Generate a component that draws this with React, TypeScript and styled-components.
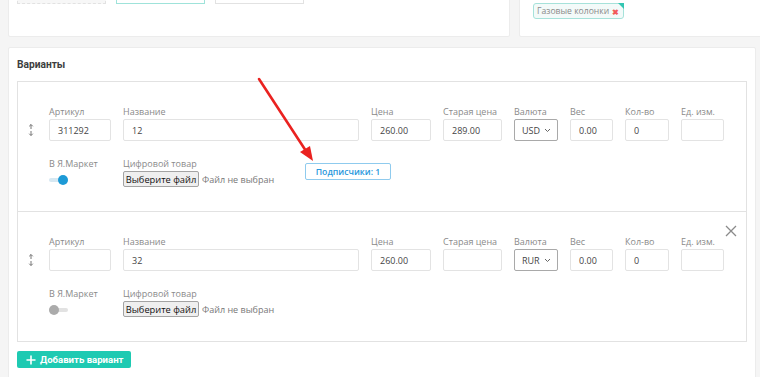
import React from "react";
import styled, { createGlobalStyle } from "styled-components";

const GlobalStyle = createGlobalStyle`
  html, body { margin: 0; padding: 0; }
  body {
    background: #f5f5f5;
    font-family: "Open Sans", "Liberation Sans", sans-serif;
    overflow: hidden;
    width: 760px;
    height: 377px;
  }
  * { box-sizing: border-box; }
`;

const Page = styled.div`
  position: relative;
  width: 760px;
  height: 377px;
  overflow: hidden;
  padding-left: 8px;
`;

const TopRow = styled.div`
  display: flex;
  gap: 9px;
  margin-top: -40px;
  height: 77px;
`;

const TopCard = styled.div<{ $w: number }>`
  flex: 0 0 ${(p) => p.$w}px;
  background: #fff;
  border: 1px solid #ececec;
  border-radius: 2px;
`;

const BoxesRow = styled.div`
  display: flex;
  gap: 10px;
  padding: 8px 0 0 8px;
`;

const ImgBox = styled.div<{ $active?: boolean; $dashed?: boolean }>`
  width: 89px;
  height: 35px;
  background: ${(p) => (p.$dashed ? "#f7f7f7" : "#fff")};
  border: 1px ${(p) => (p.$dashed ? "dashed" : "solid")}
    ${(p) => (p.$active ? "#9fe3da" : "#e2e2e2")};
`;

const TagWrap = styled.div`
  padding: 36px 0 0 13px;
`;

const Tag = styled.span`
  position: relative;
  display: inline-flex;
  align-items: center;
  gap: 3px;
  height: 16px;
  padding: 0 4px 0 3px;
  background: #f3faf9;
  border: 1px solid #a6e2da;
  border-radius: 3px;
  color: #8a8a8a;
  font-size: 8.6px;
  &::after {
    content: "";
    position: absolute;
    top: -1px;
    right: -1px;
    border-style: solid;
    border-width: 0 6px 6px 0;
    border-color: transparent #33c6b2 transparent transparent;
  }
`;

const TagX = styled.span`
  color: #f25b5b;
  font-size: 8px;
  font-weight: 700;
`;

const MainCard = styled.div`
  margin-top: 10px;
  width: 748px;
  background: #fff;
  border: 1px solid #ececec;
  border-radius: 2px;
  padding: 10px 8px 20px 8px;
`;

const Heading = styled.div`
  font-family: Roboto, "Open Sans", sans-serif;
  font-size: 10.2px;
  font-weight: 700;
  color: #3d3d3d;
  line-height: 14px;
  margin-bottom: 9px;
`;

const VariantBox = styled.div`
  position: relative;
  height: 131px;
  border: 1px solid #e2e2e2;
  padding: 23px 0 0 0;
  & + & {
    margin-top: -1px;
  }
`;

const FieldRow = styled.div`
  display: flex;
  align-items: flex-end;
`;

const Handle = styled.div`
  width: 31px;
  height: 22px;
  display: flex;
  align-items: center;
  padding-left: 10px;
`;

const Fields = styled.div`
  display: flex;
  gap: 12px;
`;

const Field = styled.div<{ $w: number }>`
  width: ${(p) => p.$w}px;
  display: flex;
  flex-direction: column;
`;

const Label = styled.div`
  font-size: 9px;
  line-height: 14px;
  color: #8a8a8a;
  white-space: nowrap;
`;

const Input = styled.div`
  height: 22px;
  border: 1px solid #e3e3e3;
  border-radius: 2px;
  font-size: 9px;
  color: #444;
  display: flex;
  align-items: center;
  padding-left: 8px;
`;

const Select = styled(Input)`
  border-color: #a9a9a9;
  padding-left: 7px;
  gap: 4px;
`;

const SecondRow = styled.div`
  display: flex;
  margin-top: 16px;
  padding-left: 31px;
`;

const ToggleCol = styled.div`
  width: 74px;
  display: flex;
  flex-direction: column;
`;

const Toggle = styled.div<{ $on?: boolean }>`
  position: relative;
  width: 20px;
  height: 16px;
  margin-top: 1px;
  &::before {
    content: "";
    position: absolute;
    left: 0;
    top: 6px;
    width: 19px;
    height: 4px;
    border-radius: 2px;
    background: ${(p) => (p.$on ? "#d6e8f2" : "#e2e2e2")};
  }
  &::after {
    content: "";
    position: absolute;
    top: 3px;
    left: ${(p) => (p.$on ? "9px" : "0")};
    width: 10px;
    height: 10px;
    border-radius: 50%;
    background: ${(p) => (p.$on ? "#1d9ad6" : "#ababab")};
  }
`;

const FileCol = styled.div`
  width: 182px;
  display: flex;
  flex-direction: column;
`;

const FileLine = styled.div`
  display: flex;
  align-items: center;
  gap: 3px;
`;

const FileButton = styled.div`
  height: 16px;
  width: 76px;
  display: flex;
  align-items: center;
  justify-content: center;
  background: #efefef;
  border: 1px solid #a3a3a3;
  border-radius: 2px;
  font-size: 9.3px;
  color: #111;
  white-space: nowrap;
`;

const FileText = styled.span`
  font-size: 9px;
  color: #777;
  white-space: nowrap;
`;

const SubsButton = styled.div`
  margin-top: 6px;
  width: 86px;
  height: 17px;
  border: 1px solid #8fcbee;
  border-radius: 2px;
  color: #2a98dc;
  font-size: 8.7px;
  font-weight: 600;
  display: flex;
  align-items: center;
  justify-content: center;
  white-space: nowrap;
`;

const CloseBtn = styled.div`
  position: absolute;
  top: 8px;
  right: 9px;
  width: 12px;
  height: 12px;
`;

const AddButton = styled.div`
  margin-top: 9px;
  width: 114px;
  height: 17px;
  background: #1ecab2;
  border-radius: 2px;
  color: #fff;
  font-family: Roboto, "Open Sans", sans-serif;
  font-size: 9.6px;
  font-weight: 700;
  display: flex;
  align-items: center;
  gap: 4px;
  padding-left: 9px;
  white-space: nowrap;
`;

const Arrow = styled.svg`
  position: absolute;
  left: 0;
  top: 0;
  pointer-events: none;
`;

const SortIcon = () => (
  <svg width="6" height="12" viewBox="0 0 6 12">
    <path d="M3 0.5 L3 5" stroke="#777" strokeWidth="1" />
    <path d="M1.2 2.3 L3 0.5 L4.8 2.3" stroke="#777" strokeWidth="1" fill="none" />
    <path d="M3 7 L3 11.5" stroke="#777" strokeWidth="1" />
    <path d="M1.2 9.7 L3 11.5 L4.8 9.7" stroke="#777" strokeWidth="1" fill="none" />
  </svg>
);

const Chevron = () => (
  <svg width="7" height="5" viewBox="0 0 7 5">
    <path d="M1 1 L3.5 3.5 L6 1" stroke="#666" strokeWidth="1" fill="none" />
  </svg>
);

type Variant = {
  sku: string;
  name: string;
  price: string;
  old: string;
  cur: string;
  on: boolean;
  subs: boolean;
  close: boolean;
};

const variants: Variant[] = [
  { sku: "311292", name: "12", price: "260.00", old: "289.00", cur: "USD", on: true, subs: true, close: false },
  { sku: "", name: "32", price: "260.00", old: "", cur: "RUR", on: false, subs: false, close: true },
];

const VariantCard = ({ v }: { v: Variant }) => (
  <VariantBox>
    {v.close && (
      <CloseBtn>
        <svg width="12" height="12" viewBox="0 0 12 12">
          <path d="M1 1 L11 11 M11 1 L1 11" stroke="#8a8a8a" strokeWidth="1.3" />
        </svg>
      </CloseBtn>
    )}
    <FieldRow>
      <Handle>
        <SortIcon />
      </Handle>
      <Fields>
        <Field $w={62}>
          <Label>Артикул</Label>
          <Input>{v.sku}</Input>
        </Field>
        <Field $w={236}>
          <Label>Название</Label>
          <Input>{v.name}</Input>
        </Field>
        <Field $w={60}>
          <Label>Цена</Label>
          <Input>{v.price}</Input>
        </Field>
        <Field $w={59}>
          <Label>Старая цена</Label>
          <Input>{v.old}</Input>
        </Field>
        <Field $w={44}>
          <Label>Валюта</Label>
          <Select>
            {v.cur}
            <Chevron />
          </Select>
        </Field>
        <Field $w={43}>
          <Label>Вес</Label>
          <Input>0.00</Input>
        </Field>
        <Field $w={44}>
          <Label>Кол-во</Label>
          <Input>0</Input>
        </Field>
        <Field $w={43}>
          <Label>Ед. изм.</Label>
          <Input />
        </Field>
      </Fields>
    </FieldRow>
    <SecondRow>
      <ToggleCol>
        <Label>В Я.Маркет</Label>
        <Toggle $on={v.on} />
      </ToggleCol>
      <FileCol>
        <Label>Цифровой товар</Label>
        <FileLine>
          <FileButton>Выберите файл</FileButton>
          <FileText>Файл не выбран</FileText>
        </FileLine>
      </FileCol>
      {v.subs && <SubsButton>Подписчики: 1</SubsButton>}
    </SecondRow>
  </VariantBox>
);

export default function App() {
  return (
    <>
      <GlobalStyle />
      <Page>
        <TopRow>
          <TopCard $w={502}>
            <BoxesRow>
              <ImgBox $dashed />
              <ImgBox $active />
              <ImgBox />
            </BoxesRow>
          </TopCard>
          <TopCard $w={260}>
            <TagWrap>
              <Tag>
                Газовые колонки <TagX>✖</TagX>
              </Tag>
            </TagWrap>
          </TopCard>
        </TopRow>
        <MainCard>
          <Heading>Варианты</Heading>
          {variants.map((v, i) => (
            <VariantCard key={i} v={v} />
          ))}
          <AddButton>
            <svg width="10" height="10" viewBox="0 0 10 10">
              <path d="M5 0.5 V9.5 M0.5 5 H9.5" stroke="#fff" strokeWidth="1.6" />
            </svg>
            Добавить вариант
          </AddButton>
        </MainCard>
        <Arrow width="760" height="377" viewBox="0 0 760 377">
          <path d="M259 79 L306 151" stroke="#ea2220" strokeWidth="2.6" strokeLinecap="round" />
          <path d="M313 161 L300 152 L310 146 Z" fill="#ea2220" />
        </Arrow>
      </Page>
    </>
  );
}
